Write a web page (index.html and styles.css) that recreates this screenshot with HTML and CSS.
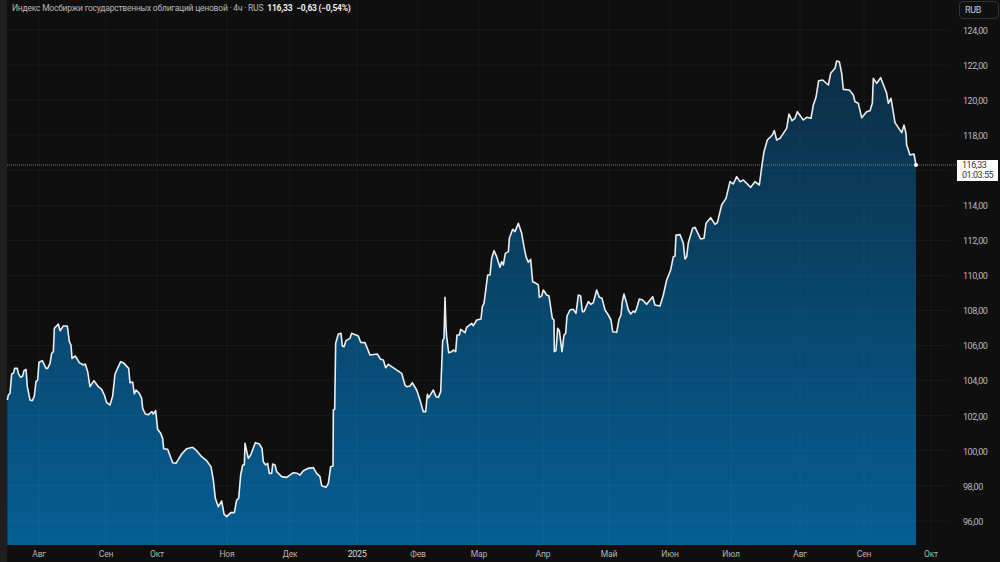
FILE: index.html
```html
<!DOCTYPE html>
<html lang="ru">
<head>
<meta charset="utf-8">
<title>Индекс Мосбиржи</title>
<link rel="stylesheet" href="styles.css">
</head>
<body>
<div class="page">
  <div class="rail"></div>
  <div class="chart">
    <div class="upper">
      <div class="plot">
        <svg class="canvas" viewBox="0 0 2829 1635" preserveAspectRatio="none" aria-hidden="true">
          <defs>
            <linearGradient id="fill" gradientUnits="userSpaceOnUse" x1="0" y1="183" x2="0" y2="1635">
              <stop offset="0" stop-color="#0c2e44"/>
              <stop offset="1" stop-color="#055e94"/>
            </linearGradient>
          </defs>
          <g transform="translate(-21 0)">
            <path class="area" d="M22 1635 L22,1200 25,1185 30,1180 35,1122 40,1120 44,1105 52,1105 55,1120 62,1132 68,1128 72,1112 78,1108 82,1160 90,1200 97,1202 103,1188 108,1145 113,1140 117,1087 127,1082 138,1105 143,1105 150,1090 155,1060 160,1055 163,985 175,972 180,992 190,978 202,978 208,1025 213,1035 216,1075 226,1068 238,1088 250,1095 256,1092 263,1115 270,1160 282,1142 295,1160 305,1168 313,1185 320,1208 330,1215 338,1188 345,1122 362,1085 372,1090 386,1105 390,1148 398,1146 403,1182 408,1170 418,1180 425,1195 428,1225 436,1242 445,1244 456,1235 460,1242 467,1232 473,1288 482,1300 488,1315 491,1346 503,1348 518,1388 528,1390 545,1362 560,1346 578,1342 590,1352 605,1370 620,1382 633,1400 640,1440 646,1495 655,1520 665,1503 672,1542 680,1550 692,1538 703,1538 710,1500 716,1495 722,1425 728,1395 733,1395 735,1330 745,1375 752,1365 766,1328 778,1332 786,1345 790,1385 797,1395 803,1390 808,1420 815,1420 818,1392 825,1395 830,1415 845,1430 860,1432 880,1418 892,1420 900,1425 910,1412 925,1405 940,1403 950,1420 960,1430 965,1457 978,1462 985,1450 992,1400 999,1398 1000,1230 1004,1228 1007,1030 1015,1002 1023,1000 1027,1038 1032,1040 1038,1022 1050,1015 1055,1000 1075,1008 1082,1027 1095,1028 1110,1065 1132,1062 1142,1078 1150,1080 1157,1103 1165,1093 1205,1120 1215,1155 1220,1160 1230,1158 1237,1148 1250,1170 1260,1200 1270,1235 1277,1235 1282,1183 1286,1193 1300,1170 1308,1190 1315,1192 1322,1175 1328,1022 1332,1015 1335,892 1338,980 1340,1010 1346,1058 1355,1055 1360,1050 1367,1055 1371,1005 1378,1005 1382,988 1395,998 1400,982 1415,970 1420,977 1430,960 1443,957 1447,920 1452,910 1463,825 1470,825 1475,775 1482,752 1490,770 1500,802 1505,785 1510,795 1516,760 1525,755 1528,715 1538,688 1545,695 1555,670 1565,700 1572,740 1578,770 1585,787 1592,778 1598,845 1605,848 1615,855 1618,892 1625,888 1630,870 1640,885 1647,888 1657,955 1662,960 1663,1055 1668,1052 1673,985 1678,992 1686,1055 1692,1005 1697,1000 1701,948 1710,930 1720,928 1728,940 1735,885 1742,888 1747,935 1752,935 1765,905 1773,913 1780,908 1790,870 1798,892 1806,895 1815,930 1825,945 1833,960 1838,995 1850,997 1857,958 1863,945 1867,905 1872,882 1880,910 1885,930 1892,942 1900,933 1905,937 1910,925 1918,897 1928,900 1940,913 1958,890 1965,915 1980,918 1990,885 2000,840 2012,810 2020,770 2025,768 2028,705 2040,704 2050,730 2055,777 2060,770 2065,728 2078,685 2085,682 2102,717 2112,715 2118,670 2132,653 2145,673 2152,668 2165,615 2178,595 2190,545 2200,552 2210,530 2220,545 2230,540 2252,562 2265,545 2278,555 2286,495 2292,455 2302,420 2317,405 2323,392 2330,420 2340,415 2360,385 2367,342 2376,362 2385,355 2392,335 2410,360 2420,352 2433,355 2440,315 2448,292 2456,242 2468,240 2485,255 2492,220 2505,205 2510,183 2518,185 2525,220 2530,268 2548,270 2560,285 2565,305 2575,310 2585,353 2600,335 2610,332 2617,310 2620,235 2630,250 2642,233 2660,280 2665,310 2673,295 2685,368 2705,398 2712,375 2718,400 2720,435 2730,465 2742,462 2748,495 L2748 1635 Z"/>
            <path class="grid" d="M117 0V1635M318 0V1635M471 0V1635M681 0V1635M870 0V1635M1071 0V1635M1254 0V1635M1437 0V1635M1629 0V1635M1827 0V1635M2010 0V1635M2193 0V1635M2400 0V1635M2592 0V1635M2793 0V1635M21 90H2850M21 195H2850M21 300H2850M21 405H2850M21 511H2850M21 616H2850M21 721H2850M21 826H2850M21 931H2850M21 1036H2850M21 1142H2850M21 1247H2850M21 1352H2850M21 1457H2850M21 1563H2850"/>
            <path class="price-line" d="M21 495H2870"/>
            <path class="line" d="M22,1200 25,1185 30,1180 35,1122 40,1120 44,1105 52,1105 55,1120 62,1132 68,1128 72,1112 78,1108 82,1160 90,1200 97,1202 103,1188 108,1145 113,1140 117,1087 127,1082 138,1105 143,1105 150,1090 155,1060 160,1055 163,985 175,972 180,992 190,978 202,978 208,1025 213,1035 216,1075 226,1068 238,1088 250,1095 256,1092 263,1115 270,1160 282,1142 295,1160 305,1168 313,1185 320,1208 330,1215 338,1188 345,1122 362,1085 372,1090 386,1105 390,1148 398,1146 403,1182 408,1170 418,1180 425,1195 428,1225 436,1242 445,1244 456,1235 460,1242 467,1232 473,1288 482,1300 488,1315 491,1346 503,1348 518,1388 528,1390 545,1362 560,1346 578,1342 590,1352 605,1370 620,1382 633,1400 640,1440 646,1495 655,1520 665,1503 672,1542 680,1550 692,1538 703,1538 710,1500 716,1495 722,1425 728,1395 733,1395 735,1330 745,1375 752,1365 766,1328 778,1332 786,1345 790,1385 797,1395 803,1390 808,1420 815,1420 818,1392 825,1395 830,1415 845,1430 860,1432 880,1418 892,1420 900,1425 910,1412 925,1405 940,1403 950,1420 960,1430 965,1457 978,1462 985,1450 992,1400 999,1398 1000,1230 1004,1228 1007,1030 1015,1002 1023,1000 1027,1038 1032,1040 1038,1022 1050,1015 1055,1000 1075,1008 1082,1027 1095,1028 1110,1065 1132,1062 1142,1078 1150,1080 1157,1103 1165,1093 1205,1120 1215,1155 1220,1160 1230,1158 1237,1148 1250,1170 1260,1200 1270,1235 1277,1235 1282,1183 1286,1193 1300,1170 1308,1190 1315,1192 1322,1175 1328,1022 1332,1015 1335,892 1338,980 1340,1010 1346,1058 1355,1055 1360,1050 1367,1055 1371,1005 1378,1005 1382,988 1395,998 1400,982 1415,970 1420,977 1430,960 1443,957 1447,920 1452,910 1463,825 1470,825 1475,775 1482,752 1490,770 1500,802 1505,785 1510,795 1516,760 1525,755 1528,715 1538,688 1545,695 1555,670 1565,700 1572,740 1578,770 1585,787 1592,778 1598,845 1605,848 1615,855 1618,892 1625,888 1630,870 1640,885 1647,888 1657,955 1662,960 1663,1055 1668,1052 1673,985 1678,992 1686,1055 1692,1005 1697,1000 1701,948 1710,930 1720,928 1728,940 1735,885 1742,888 1747,935 1752,935 1765,905 1773,913 1780,908 1790,870 1798,892 1806,895 1815,930 1825,945 1833,960 1838,995 1850,997 1857,958 1863,945 1867,905 1872,882 1880,910 1885,930 1892,942 1900,933 1905,937 1910,925 1918,897 1928,900 1940,913 1958,890 1965,915 1980,918 1990,885 2000,840 2012,810 2020,770 2025,768 2028,705 2040,704 2050,730 2055,777 2060,770 2065,728 2078,685 2085,682 2102,717 2112,715 2118,670 2132,653 2145,673 2152,668 2165,615 2178,595 2190,545 2200,552 2210,530 2220,545 2230,540 2252,562 2265,545 2278,555 2286,495 2292,455 2302,420 2317,405 2323,392 2330,420 2340,415 2360,385 2367,342 2376,362 2385,355 2392,335 2410,360 2420,352 2433,355 2440,315 2448,292 2456,242 2468,240 2485,255 2492,220 2505,205 2510,183 2518,185 2525,220 2530,268 2548,270 2560,285 2565,305 2575,310 2585,353 2600,335 2610,332 2617,310 2620,235 2630,250 2642,233 2660,280 2665,310 2673,295 2685,368 2705,398 2712,375 2718,400 2720,435 2730,465 2742,462 2748,495"/>
            <circle class="dot" cx="2748" cy="495" r="6"/>
          </g>
        </svg>
        <div class="legend">
          <span class="legend-name">Индекс Мосбиржи государственных облигаций ценовой · 4ч · RUS</span>
          <span class="legend-value">116,33</span>
          <span class="legend-value">−0,63 (−0,54%)</span>
        </div>
      </div>
      <div class="price-axis">
        <div class="currency">RUB</div>
        <ul class="ticks">
          <li>124,00</li><li>122,00</li><li>120,00</li><li>118,00</li><li class="tick-hidden">116,00</li><li>114,00</li><li>112,00</li><li>110,00</li><li>108,00</li><li>106,00</li><li>104,00</li><li>102,00</li><li>100,00</li><li>98,00</li><li>96,00</li>
        </ul>
        <div class="price-tag"><span>116,33</span><span>01:03:55</span></div>
      </div>
    </div>
    <div class="time-axis">
      <span class="t" style="--x:32px">Авг</span>
      <span class="t" style="--x:99px">Сен</span>
      <span class="t" style="--x:150px">Окт</span>
      <span class="t" style="--x:220px">Ноя</span>
      <span class="t" style="--x:283px">Дек</span>
      <span class="t t-year" style="--x:350px">2025</span>
      <span class="t" style="--x:411px">Фев</span>
      <span class="t" style="--x:472px">Мар</span>
      <span class="t" style="--x:536px">Апр</span>
      <span class="t" style="--x:602px">Май</span>
      <span class="t" style="--x:663px">Июн</span>
      <span class="t" style="--x:724px">Июл</span>
      <span class="t" style="--x:793px">Авг</span>
      <span class="t" style="--x:857px">Сен</span>
      <span class="t" style="--x:924px">Окт</span>
    </div>
  </div>
</div>
</body>
</html>
```

FILE: styles.css
```css
* { box-sizing: border-box; }
html, body { margin: 0; height: 100%; background: #0f0f0f; }
body { font-family: Roboto, "Liberation Sans", sans-serif; color: #d1d1d1; overflow: hidden; }
.page { display: flex; width: 1000px; height: 562px; }
.rail { width: 7px; flex: none; background: #1e1e1e; }
.chart { flex: 1; display: flex; flex-direction: column; min-width: 0; }
.upper { display: flex; height: 545px; }
.plot { position: relative; width: 943px; flex: none; height: 545px; }
.canvas { position: absolute; inset: 0; width: 100%; height: 100%; display: block; overflow: visible; }
.area { fill: url(#fill); }
.grid { fill: none; stroke: rgba(255,255,255,.045); stroke-width: 3; }
.price-line { fill: none; stroke: #8f8f8f; stroke-width: 2.4; stroke-dasharray: 3 3; }
.line { fill: none; stroke: #fff; stroke-width: 4.8; stroke-linejoin: round; opacity: .92; }
.dot { fill: #fff; }
.legend { position: absolute; left: 5px; top: 3px; display: flex; gap: 4px; font-size: 8.5px; line-height: 11px; letter-spacing: -.22px; white-space: nowrap; }
.legend-name { color: #b8b8b8; }
.legend-value { color: #eee; font-weight: 700; letter-spacing: -.22px; }
.price-axis { position: relative; flex: 1; padding-top: 1px; }
.currency { margin-left: 9px; width: 40px; height: 18px; border: 1px solid #333; border-radius: 4px; font-size: 9px; letter-spacing: -.3px; line-height: 16px; padding-left: 5px; color: #ccc; }
.ticks { list-style: none; margin: 6px 0 0; padding: 0 0 0 13px; display: flex; flex-direction: column; font-size: 9px; letter-spacing: -.45px; color: #b9b9b9; text-align: left; }
.ticks li { height: 35.05px; line-height: 12px; }
.tick-hidden { visibility: hidden; }
.price-tag { position: absolute; left: 7px; top: 160px; width: 41px; height: 21px; background: #fff; color: #333; font-size: 9px; letter-spacing: -.45px; line-height: 10px; display: flex; flex-direction: column; padding: 0 0 0 5px; }
.time-axis { position: relative; height: 17px; font-size: 8.5px; letter-spacing: -.15px; color: #b4b4b4; }
.t { position: absolute; left: var(--x); top: 3px; transform: translateX(-50%); line-height: 12px; }
.t-year { color: #d8d8d8; font-size: 9px; letter-spacing: -.4px; }
```
